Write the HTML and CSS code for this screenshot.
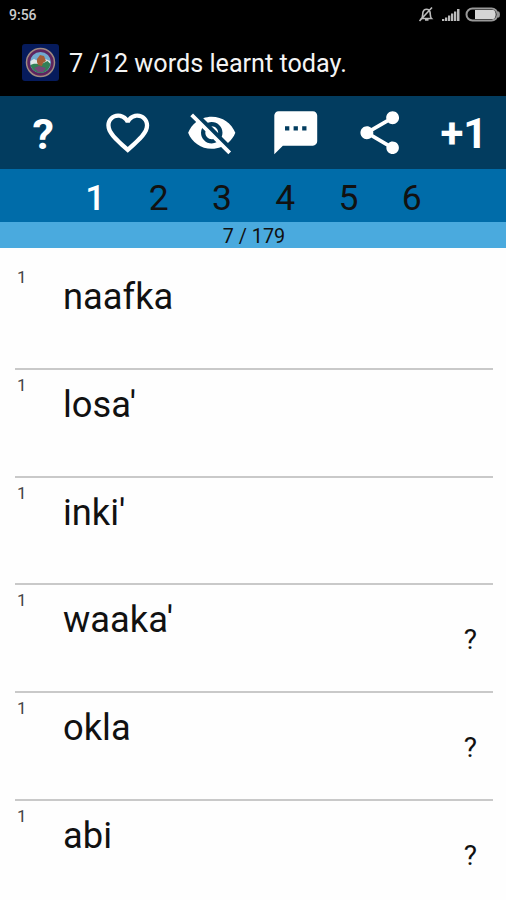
FILE: index.html
```html
<!DOCTYPE html>
<html lang="en">
<head>
  <meta charset="UTF-8">
  <meta name="viewport" content="width=device-width, initial-scale=1.0">
  <title>Words</title>
  <link rel="stylesheet" href="styles.css">
</head>
<body>

  <!-- Phone status bar -->
  <div class="status-bar">
    <span class="clock">9:56</span>
    <svg class="status-icons" viewBox="0 0 84 18" width="84" height="18">
      <g fill="none" stroke="#bbb" stroke-width="1.6">
        <path d="M4.5 13.5C6 12 5.5 9 6 7c.6-2 2-2.8 3.500-2.800S12.500 5 13 7c.4 2 0 5 1.500 6.500zM8 15h3.500M2.500 16 15 2.500"/>
      </g>
      <path fill="#bbb" d="M25 14h2.300v2H25zM28 12.500h2.300V16H28zM31 10.500h2.300V16H31zM34 8.500h2.300V16H34zM37 6.500h2.300V16H37zM40 4h2.500v12H40z"/>
      <rect x="49.500" y="3.500" width="31" height="12" rx="6" fill="none" stroke="#999" stroke-width="2"/>
      <path fill="#d5d5d5" d="M58 5h18.500c3 1 3 8 0 9H58z"/>
      <path fill="#999" d="M81 6.500h1c1.300 1.500 1.300 4.500 0 6h-1z"/>
    </svg>
  </div>

  <header class="header">
    <svg class="emblem" viewBox="0 0 37 37" width="37" height="37">
      <rect width="37" height="37" rx="3" fill="#061b5c"/>
      <circle cx="18.500" cy="18.500" r="14" fill="#5d245f" stroke="#a08b80" stroke-width="1.500"/>
      <circle cx="18.500" cy="18.500" r="10.500" fill="#72a9cf"/>
      <path fill="#e0e8e8" d="M8.500 17 12 15l4 2 5-3 7 3v4H8.500z"/>
      <path fill="#328057" d="M8.500 21c5-3 8 0 11-1l6-3 3 3c-1 5-5 9-10 9s-9-4-10-8z"/>
      <path fill="#a55d36" d="M15 15l3-4 4 1 2 5-3 2-1 3-4-1-1-3z"/>
      <path fill="#764779" d="M12 24l5-2 7 2-3 4h-5z"/>
    </svg>
    <h1 class="title">7 /12 words learnt today.</h1>
  </header>

  <!-- Actions -->
  <nav class="toolbar">
    <span class="tool tool-text">?</span>
    <span class="tool">
      <svg class="icon" viewBox="0 0 24 24"><path d="M16.5 3c-1.740 0-3.410.810-4.500 2.090C10.910 3.810 9.240 3 7.500 3 4.420 3 2 5.420 2 8.500c0 3.780 3.400 6.860 8.550 11.540L12 21.350l1.450-1.320C18.600 15.360 22 12.280 22 8.500 22 5.420 19.580 3 16.500 3zm-4.400 15.550l-.1.100-.1-.1C7.140 14.240 4 11.390 4 8.500 4 6.500 5.500 5 7.500 5c1.540 0 3.040.990 3.570 2.360h1.870C13.460 5.990 14.960 5 16.500 5c2 0 3.500 1.500 3.500 3.500 0 2.890-3.140 5.740-7.900 10.050z"/></svg>
    </span>
    <span class="tool">
      <svg class="icon" viewBox="0 0 24 24"><path d="M12 7c2.760 0 5 2.240 5 5 0 .650-.130 1.260-.360 1.830l2.920 2.920c1.510-1.260 2.700-2.890 3.430-4.750-1.730-4.390-6-7.500-11-7.500-1.400 0-2.740.250-3.980.700l2.160 2.160C10.740 7.130 11.350 7 12 7zM2 4.270l2.280 2.280.460.460C3.080 8.300 1.780 10.020 1 12c1.730 4.390 6 7.500 11 7.500 1.550 0 3.030-.300 4.380-.840l.420.420L19.730 22 21 20.730 3.270 3 2 4.270zM7.530 9.800l1.550 1.550c-.050.210-.080.430-.080.650 0 1.660 1.340 3 3 3 .220 0 .440-.030.650-.080l1.550 1.550c-.670.330-1.410.530-2.200.530-2.760 0-5-2.240-5-5 0-.790.200-1.530.530-2.200zm4.310-.780l3.150 3.150.020-.160c0-1.660-1.340-3-3-3l-.170.010z"/></svg>
    </span>
    <span class="tool">
      <svg class="icon" viewBox="0 0 24 24"><path d="M20 2H4c-1.100 0-1.990.900-1.990 2L2 22l4-4h14c1.100 0 2-.900 2-2V4c0-1.100-.900-2-2-2zM9 11H7V9h2v2zm4 0h-2V9h2v2zm4 0h-2V9h2v2z"/></svg>
    </span>
    <span class="tool">
      <svg class="icon" viewBox="0 0 24 24"><path d="M18 16.080c-.760 0-1.440.300-1.960.770L8.910 12.700c.050-.230.090-.460.090-.700s-.040-.470-.090-.700l7.050-4.110c.540.500 1.250.810 2.040.810 1.660 0 3-1.340 3-3s-1.340-3-3-3-3 1.340-3 3c0 .240.040.470.090.700L8.040 9.810C7.500 9.310 6.790 9 6 9c-1.660 0-3 1.340-3 3s1.340 3 3 3c.790 0 1.500-.310 2.040-.810l7.120 4.160c-.050.210-.080.430-.080.650 0 1.610 1.310 2.920 2.920 2.920s2.920-1.310 2.920-2.920-1.310-2.920-2.920-2.920z"/></svg>
    </span>
    <span class="tool tool-text plus">+1</span>
  </nav>

  <!-- Level tabs -->
  <nav class="levels">
    <span class="level active">1</span>
    <span class="level">2</span>
    <span class="level">3</span>
    <span class="level">4</span>
    <span class="level">5</span>
    <span class="level">6</span>
  </nav>
  <div class="progress">7 / 179</div>

  <!-- Word list -->
  <ul class="word-list">
    <li class="word-item"><span class="word-level">1</span><span class="word">naafka</span></li>
    <li class="word-item"><span class="word-level">1</span><span class="word">losa'</span></li>
    <li class="word-item"><span class="word-level">1</span><span class="word">inki'</span></li>
    <li class="word-item"><span class="word-level">1</span><span class="word">waaka'</span><span class="hint">?</span></li>
    <li class="word-item"><span class="word-level">1</span><span class="word">okla</span><span class="hint">?</span></li>
    <li class="word-item"><span class="word-level">1</span><span class="word">abi</span><span class="hint">?</span></li>
  </ul>

</body>
</html>
```
FILE: styles.css
```css
/* Base styles */
* {
  margin: 0;
  padding: 0;
  box-sizing: border-box;
}

body {
  font-family: Roboto, 'Liberation Sans', sans-serif;
  background-color: #fefefe;
  color: #111;
  height: 900px;
  overflow: hidden;
}

/* Status bar */
.status-bar {
  height: 30px;
  padding: 0 5px 0 9px;
  display: flex;
  justify-content: space-between;
  align-items: center;
  background-color: #000;
  color: #ccc;
}

.clock {
  font-size: 14px;
  font-weight: 500;
}

.status-icons {
  margin-top: -3px;
}

/* Header */
.header {
  height: 65.5px;
  padding: 14px 0 0 22px;
  display: flex;
  gap: 10px;
  background-color: #000;
  color: #f4f4f4;
}

.title {
  font-size: 25.2px;
  font-weight: 400;
  line-height: 39px;
}

/* Toolbar */
.toolbar {
  height: 73.5px;
  padding-left: 1px;
  display: flex;
  background-color: #023c5f;
  color: #fff;
}

.tool {
  flex: 1;
  display: flex;
  justify-content: center;
  align-items: center;
}

.tool-text {
  font-size: 43px;
  font-weight: 700;
  padding-top: 3px;
}

.plus {
  font-size: 42px;
}

.icon {
  width: 51.5px;
  height: 51.5px;
  fill: #fff;
}

/* Levels */
.levels {
  height: 53px;
  padding: 0 12.4% 0 12.6%;
  display: flex;
  background-color: #006ca9;
}

.level {
  flex: 1;
  font-size: 35.5px;
  line-height: 58px;
  text-align: center;
}

.level.active {
  color: #fff;
  font-weight: 500;
}

.progress {
  height: 26px;
  padding-left: 2px;
  font-size: 19.8px;
  line-height: 30px;
  text-align: center;
  background-color: #4aaade;
}

/* Word list */
.word-list {
  list-style: none;
  padding: 14px 13px 0 15px;
}

.word-item {
  height: 107.8px;
  display: flex;
  align-items: flex-start;
  border-bottom: 2px solid #c9c9c9;
}

.word-level {
  width: 48px;
  padding: 5px 0 0 2px;
  font-size: 17px;
  line-height: 20px;
  color: #444;
}

.word {
  flex: 1;
  padding-top: 13px;
  font-size: 36.3px;
  line-height: 44px;
}

.hint {
  padding: 38px 16px 0 0;
  font-size: 28px;
  line-height: 34px;
}
```
